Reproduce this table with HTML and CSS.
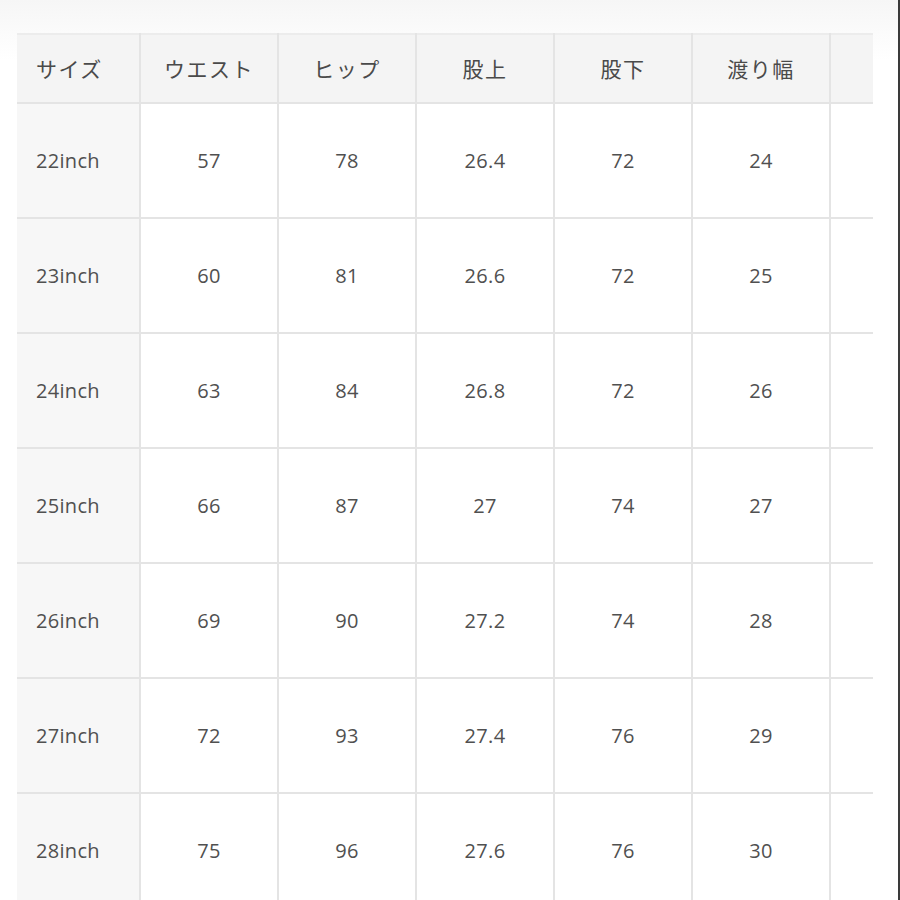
FILE: index.html
```html
<!DOCTYPE html>
<html lang="ja">
<head>
<meta charset="utf-8">
<link rel="stylesheet" href="styles.css">
</head>
<body>
<div class="frame">
  <table class="size-table">
    <colgroup>
      <col class="c-size"><col class="c-val"><col class="c-val"><col class="c-val"><col class="c-val"><col class="c-val"><col class="c-rest">
    </colgroup>
    <thead>
      <tr><th class="first">サイズ</th><th>ウエスト</th><th>ヒップ</th><th>股上</th><th>股下</th><th>渡り幅</th><th class="rest"></th></tr>
    </thead>
    <tbody>
      <tr><td class="first">22inch</td><td>57</td><td>78</td><td>26.4</td><td>72</td><td>24</td><td class="rest"></td></tr>
      <tr><td class="first">23inch</td><td>60</td><td>81</td><td>26.6</td><td>72</td><td>25</td><td class="rest"></td></tr>
      <tr><td class="first">24inch</td><td>63</td><td>84</td><td>26.8</td><td>72</td><td>26</td><td class="rest"></td></tr>
      <tr><td class="first">25inch</td><td>66</td><td>87</td><td>27</td><td>74</td><td>27</td><td class="rest"></td></tr>
      <tr><td class="first">26inch</td><td>69</td><td>90</td><td>27.2</td><td>74</td><td>28</td><td class="rest"></td></tr>
      <tr><td class="first">27inch</td><td>72</td><td>93</td><td>27.4</td><td>76</td><td>29</td><td class="rest"></td></tr>
      <tr><td class="first">28inch</td><td>75</td><td>96</td><td>27.6</td><td>76</td><td>30</td><td class="rest"></td></tr>
    </tbody>
  </table>
</div>
</body>
</html>
```
FILE: styles.css
```css
html, body {
  margin: 0;
  padding: 0;
  background: #ffffff;
}
body {
  width: 900px;
  height: 900px;
  overflow: hidden;
  font-family: "Open Sans", "Noto Sans CJK JP", sans-serif;
  color: #505050;
}
.frame {
  box-sizing: border-box;
  width: 900px;
  height: 900px;
  padding: 33px 0 0 17px;
  border-right: 2px solid #3a3a3a;
  background: linear-gradient(to bottom, #f6f6f6 0px, #fbfbfb 33px, #ffffff 60px);
}
.size-table {
  border-collapse: collapse;
  table-layout: fixed;
  width: 856px;
  background: #ffffff;
}
.c-size { width: 123px; }
.c-val { width: 138px; }
.c-rest { width: 43px; }
.size-table th,
.size-table td {
  border: 2px solid #e4e4e4;
  text-align: center;
  padding: 0;
  font-size: 20px;
  font-weight: 400;
  color: #505050;
}
.size-table thead th {
  height: 65px;
  padding-bottom: 2px;
  background: #f4f4f4;
  border-top: 2px solid #ececec;
  font-family: "Noto Sans CJK JP", sans-serif;
  font-size: 21px;
  font-weight: 400;
  letter-spacing: 1.5px;
  color: #4a4a4a;
}
.size-table tbody td {
  height: 113px;
  letter-spacing: 0.3px;
}
.size-table .first {
  text-align: left;
  padding-left: 19px;
  border-left: none;
}
.size-table tbody td.first {
  background: #f7f7f7;
}
.size-table .rest {
  border-right: none;
}
```
